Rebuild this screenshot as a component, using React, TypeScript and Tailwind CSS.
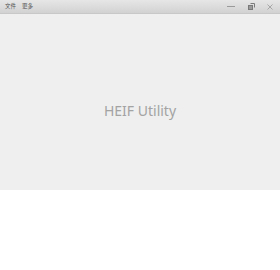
import React from 'react';

const App: React.FC = () => {
  return (
    <div className="w-[280px] h-[270px] bg-white font-['Noto_Sans','Noto_Sans_CJK_SC',sans-serif]">
      {/* Title bar */}
      <div className="h-[14px] flex items-center bg-gradient-to-b from-[#e6e6e6] to-[#d2d2d2] border-b border-[#c8c8c8]">
        <div className="flex items-center gap-[6px] pl-[5px] text-[5.5px] leading-none text-[#555]">
          <span>文件</span>
          <span>更多</span>
        </div>
        <div className="ml-auto flex items-center h-full pr-[1px]">
          <div className="w-[20px] h-full flex items-center justify-center">
            <div className="w-[8px] h-[1px] bg-[#9a9a9a]" />
          </div>
          <div className="w-[20px] h-full flex items-center justify-center">
            <svg width="7" height="7" viewBox="0 0 7 7">
              <rect x="0.5" y="2.5" width="4" height="4" fill="#9a9a9a" stroke="#7a7a7a" />
              <path d="M2.5 0.5H6.5V4.5" fill="none" stroke="#7a7a7a" />
            </svg>
          </div>
          <div className="w-[18px] h-full flex items-center justify-center">
            <svg width="6" height="6" viewBox="0 0 6 6">
              <path d="M0.5 0.5L5.5 5.5M5.5 0.5L0.5 5.5" stroke="#a0a0a0" strokeWidth="0.9" />
            </svg>
          </div>
        </div>
      </div>
      {/* Main area */}
      <div className="h-[176px] bg-[#efefef] flex items-center justify-center">
        <span className="text-[14px] leading-none text-[#a3a3a3] mt-[18px]">HEIF Utility</span>
      </div>
    </div>
  );
};

export default App;
